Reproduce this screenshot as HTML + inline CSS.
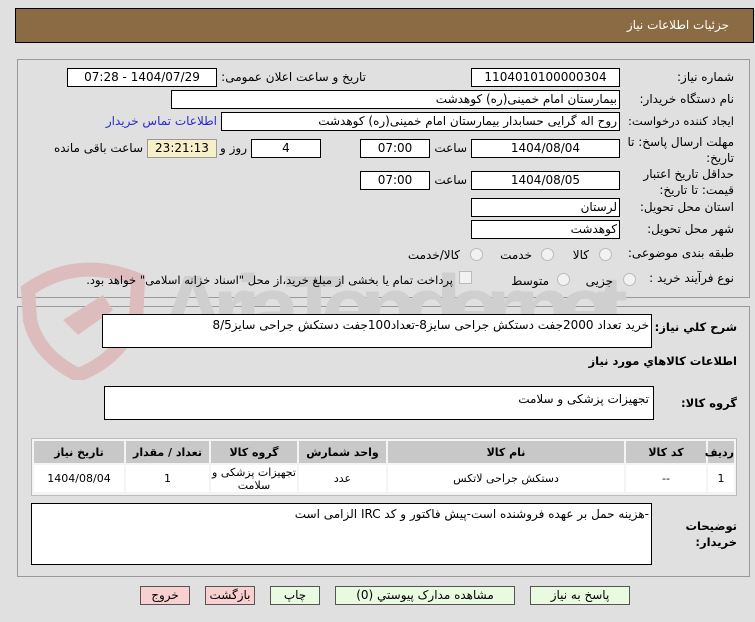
<!DOCTYPE html>
<html><head><meta charset="utf-8">
<style>
body{margin:0;width:755px;height:622px;background:#e0e0e0;position:relative;overflow:hidden;font-family:"DejaVu Sans","Liberation Sans",sans-serif;font-size:12px;color:#000}
.a{position:absolute}
.box{position:absolute;background:#fff;border:1px solid #000;box-sizing:border-box;height:19px;line-height:17px;font-size:12px;text-align:center;direction:rtl;white-space:nowrap;overflow:hidden}
.l{position:absolute;direction:rtl;text-align:right;white-space:nowrap;font-size:12px}
.b{font-weight:bold;font-size:11.5px}
.btn{position:absolute;top:586px;height:19px;border:1px solid #555;box-sizing:border-box;text-align:center;line-height:17px;font-size:12px;direction:rtl}
.g{background:#e8fbe0}.p{background:#f9d0d0}
table{border-collapse:separate;border-spacing:2px;table-layout:fixed}
td{text-align:center;font-size:11px;padding:0}
.rad{position:absolute;width:11px;height:11px;border-radius:50%;border:1px solid #bbb;background:#f2f2f2}
</style></head><body>
<div class="a" style="left:15px;top:8px;width:739px;height:35px;background:#8b6b43;border:1px solid #000;box-sizing:border-box"></div>
<div class="l" style="right:26px;top:18px;color:#fff;font-size:12px">جزئیات اطلاعات نیاز</div>

<div class="a" style="left:17px;top:59px;width:733px;height:239px;border:1px solid #999;box-sizing:border-box"></div>
<div class="a" style="left:17px;top:306px;width:733px;height:271px;border:1px solid #999;box-sizing:border-box"></div>

<svg class="a" style="left:18px;top:250px" width="620" height="130">
<path d="M10 40 Q60 5 120 30 L118 70 Q100 110 60 125 Q20 105 12 70 Z" fill="none" stroke="#dcbcbc" stroke-width="14"/>
<path d="M45 70 L85 45 L95 60 L60 85 Z" fill="#dcbcbc"/>
<text x="140" y="92" font-family="Liberation Sans" font-weight="bold" font-size="96" fill="#cfcfcf" textLength="470">AriaTender.net</text>
</svg>

<div class="l" style="right:21px;top:70px">شماره نیاز:</div>
<div class="box" style="left:471px;top:68px;width:149px">1104010100000304</div>
<div class="l" style="right:389px;top:70px">تاریخ و ساعت اعلان عمومی:</div>
<div class="box" style="left:67px;top:68px;width:150px">1404/07/29 - 07:28</div>

<div class="l" style="right:21px;top:92px">نام دستگاه خریدار:</div>
<div class="box" style="left:171px;top:90px;width:449px;text-align:right;padding-right:2px">بیمارستان امام خمینی(ره) کوهدشت</div>

<div class="l" style="right:21px;top:114px;font-size:11.5px">ایجاد کننده درخواست:</div>
<div class="box" style="left:221px;top:112px;width:399px;text-align:right;padding-right:2px">روح اله گرایی حسابدار بیمارستان امام خمینی(ره) کوهدشت</div>
<div class="l" style="right:538px;top:114px;color:#2a2ad0">اطلاعات تماس خریدار</div>

<div class="l" style="right:21px;top:134px;line-height:16px;white-space:normal;width:112px">مهلت ارسال پاسخ: تا تاریخ:</div>
<div class="box" style="left:471px;top:139px;width:149px">1404/08/04</div>
<div class="l" style="right:288px;top:141px">ساعت</div>
<div class="box" style="left:360px;top:139px;width:70px">07:00</div>
<div class="box" style="left:251px;top:139px;width:70px">4</div>
<div class="l" style="right:508px;top:141px">روز و</div>
<div class="box" style="left:147px;top:139px;width:70px;background:#f5f0c8;border-color:#999">23:21:13</div>
<div class="l" style="right:612px;top:141px">ساعت باقی مانده</div>

<div class="l" style="right:21px;top:166px;line-height:16px;white-space:normal;width:112px">حداقل تاریخ اعتبار قیمت: تا تاریخ:</div>
<div class="box" style="left:471px;top:171px;width:149px">1404/08/05</div>
<div class="l" style="right:288px;top:173px">ساعت</div>
<div class="box" style="left:360px;top:171px;width:70px">07:00</div>

<div class="l" style="right:21px;top:200px">استان محل تحویل:</div>
<div class="box" style="left:471px;top:198px;width:149px;text-align:right;padding-right:2px">لرستان</div>
<div class="l" style="right:21px;top:222px">شهر محل تحویل:</div>
<div class="box" style="left:471px;top:220px;width:149px;text-align:right;padding-right:2px">کوهدشت</div>

<div class="l" style="right:21px;top:246px">طبقه بندی موضوعی:</div>
<div class="rad" style="left:599px;top:248px"></div><div class="l" style="right:166px;top:248px">کالا</div>
<div class="rad" style="left:541px;top:248px"></div><div class="l" style="right:223px;top:248px">خدمت</div>
<div class="rad" style="left:470px;top:248px"></div><div class="l" style="right:295px;top:248px">کالا/خدمت</div>

<div class="l" style="right:21px;top:271px">نوع فرآیند خرید :</div>
<div class="rad" style="left:623px;top:273px"></div><div class="l" style="right:142px;top:274px">جزیی</div>
<div class="rad" style="left:557px;top:273px"></div><div class="l" style="right:206px;top:274px">متوسط</div>
<div class="a" style="left:459px;top:271px;width:11px;height:11px;border:1px solid #bbb;background:#f2f2f2"></div>
<div class="l" style="right:302px;top:273px;font-size:11.5px">پرداخت تمام یا بخشی از مبلغ خرید،از محل "اسناد خزانه اسلامی" خواهد بود.</div>

<div class="l b" style="right:18px;top:320px">شرح کلي نیاز:</div>
<div class="box" style="left:102px;top:314px;width:550px;height:34px;text-align:right;padding-right:2px;line-height:20px">خرید تعداد 2000جفت دستکش جراحی سایز8-تعداد100جفت دستکش جراحی سایز8/5</div>
<div class="l b" style="right:18px;top:354px">اطلاعات کالاهاي مورد نیاز</div>
<div class="l b" style="right:18px;top:396px">گروه کالا:</div>
<div class="box" style="left:104px;top:386px;width:550px;height:34px;text-align:right;padding-right:4px;line-height:24px">تجهیزات پزشکی و سلامت</div>

<div class="a" style="left:31px;top:438px;width:706px;height:58px;border:1px solid #bbb;box-sizing:border-box;background:#f4f4f4">
<table style="width:704px;direction:rtl" dir="rtl">
<tr style="background:#c8c8c8;height:22px;font-weight:bold">
<td style="width:26px">ردیف</td><td style="width:80px">کد کالا</td><td style="width:236px">نام کالا</td><td style="width:87px">واحد شمارش</td><td style="width:86px">گروه کالا</td><td style="width:83px">تعداد / مقدار</td><td>تاریخ نیاز</td></tr>
<tr style="background:#fff;height:27px">
<td>1</td><td>--</td><td>دستکش جراحی لاتکس</td><td>عدد</td><td style="line-height:13px">تجهیزات پزشکی و سلامت</td><td>1</td><td>1404/08/04</td></tr>
</table></div>

<div class="l b" style="right:18px;top:518px;line-height:16px;white-space:normal;width:60px">توضیحات خریدار:</div>
<div class="box" style="left:31px;top:503px;width:621px;height:62px;text-align:right;padding-right:2px;line-height:20px">-هزینه حمل بر عهده فروشنده است-پیش فاکتور و کد IRC الزامی است</div>

<div class="btn p" style="left:140px;width:50px">خروج</div>
<div class="btn p" style="left:205px;width:50px">بازگشت</div>
<div class="btn g" style="left:270px;width:50px">چاپ</div>
<div class="btn g" style="left:335px;width:180px">مشاهده مدارک پیوستي (0)</div>
<div class="btn g" style="left:530px;width:100px">پاسخ به نیاز</div>
</body></html>
